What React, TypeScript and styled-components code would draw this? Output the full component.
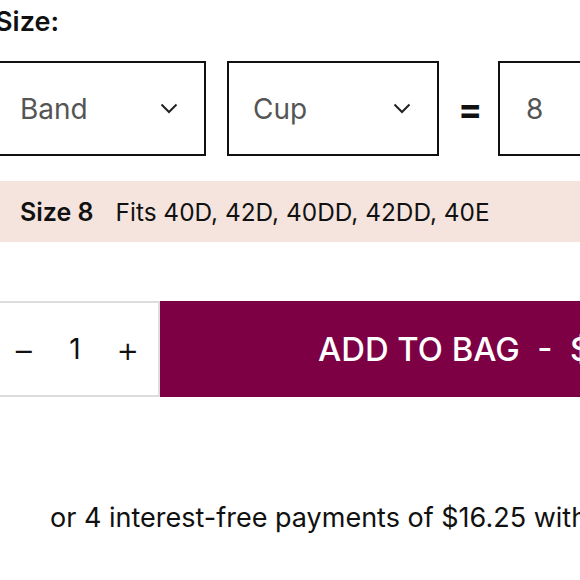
import React from "react";
import styled, { createGlobalStyle } from "styled-components";

const GlobalStyle = createGlobalStyle`
  html, body {
    margin: 0;
    padding: 0;
    background: #ffffff;
    overflow: hidden;
  }
  body {
    font-family: Inter, "Liberation Sans", Arial, sans-serif;
    color: #111;
  }
`;

const Chevron = () => (
  <svg width="18" height="11" viewBox="0 0 18 11" fill="none">
    <path d="M1.5 1.5 L9 9 L16.5 1.5" stroke="#222" strokeWidth="2" />
  </svg>
);

const App: React.FC = () => {
  return (
    <>
      <GlobalStyle />
      <Page>
        <Label>Size:</Label>
        <SelectRow>
          <Select>
            <SelectText>Band</SelectText>
            <Chevron />
          </Select>
          <Select>
            <SelectText>Cup</SelectText>
            <Chevron />
          </Select>
          <Equals>=</Equals>
          <ResultBox>8</ResultBox>
        </SelectRow>
        <FitBanner>
          <strong>Size 8</strong>
          <span>Fits 40D, 42D, 40DD, 42DD, 40E</span>
        </FitBanner>
        <BuyRow>
          <Stepper>
            <StepButton type="button">−</StepButton>
            <Qty>1</Qty>
            <StepButton type="button">+</StepButton>
          </Stepper>
          <AddButton type="button">ADD TO BAG&nbsp;&nbsp;-&nbsp;&nbsp;$65.00</AddButton>
        </BuyRow>
        <Installments>
          or 4 interest-free payments of $16.25 with Afterpay
        </Installments>
      </Page>
    </>
  );
};

export default App;

const Page = styled.div`
  width: 900px;
  margin-left: -6px;
  display: flex;
  flex-direction: column;
`;

const Label = styled.div`
  font-size: 27px;
  font-weight: 600;
  line-height: 1;
  margin-top: 8px;
  padding-left: 1px;
`;

const SelectRow = styled.div`
  display: flex;
  align-items: center;
  margin-top: 26px;
`;

const Select = styled.div`
  box-sizing: border-box;
  width: 212px;
  height: 95px;
  border: 2px solid #111;
  display: flex;
  align-items: center;
  justify-content: space-between;
  padding: 0 26px 0 24px;
  margin-right: 21px;
`;

const SelectText = styled.span`
  font-size: 28px;
  color: #555;
`;

const Equals = styled.span`
  font-size: 36px;
  font-weight: 700;
  width: 22px;
  text-align: center;
  margin-right: 18px;
  margin-left: -2px;
`;

const ResultBox = styled.div`
  box-sizing: border-box;
  width: 212px;
  height: 95px;
  border: 2px solid #111;
  display: flex;
  align-items: center;
  padding-left: 26px;
  font-size: 28px;
  color: #555;
`;

const FitBanner = styled.div`
  margin-top: 25px;
  height: 61px;
  background: #f5e4de;
  display: flex;
  align-items: center;
  gap: 22px;
  padding-left: 26px;
  font-size: 24.4px;
  color: #111;

  strong {
    font-size: 25px;
    font-weight: 600;
  }
`;

const BuyRow = styled.div`
  display: flex;
  margin-top: 59px;
  height: 96px;
`;

const Stepper = styled.div`
  box-sizing: border-box;
  width: 166px;
  border: 2px solid #ddd;
  display: flex;
  align-items: center;
  justify-content: space-between;
  padding: 0 20px 0 16px;
`;

const StepButton = styled.button`
  all: unset;
  font-size: 36px;
  font-weight: 300;
  line-height: 1;
  width: 22px;
  text-align: center;
  color: #111;
`;

const Qty = styled.span`
  font-size: 28px;
`;

const AddButton = styled.button`
  all: unset;
  flex: 1;
  background: #7d0045;
  color: #fff;
  font-size: 32.8px;
  font-weight: 500;
  padding-left: 158px;
  display: flex;
  align-items: center;
  white-space: nowrap;
`;

const Installments = styled.p`
  margin: 104px 0 0 56px;
  font-size: 27px;
  white-space: nowrap;
`;
